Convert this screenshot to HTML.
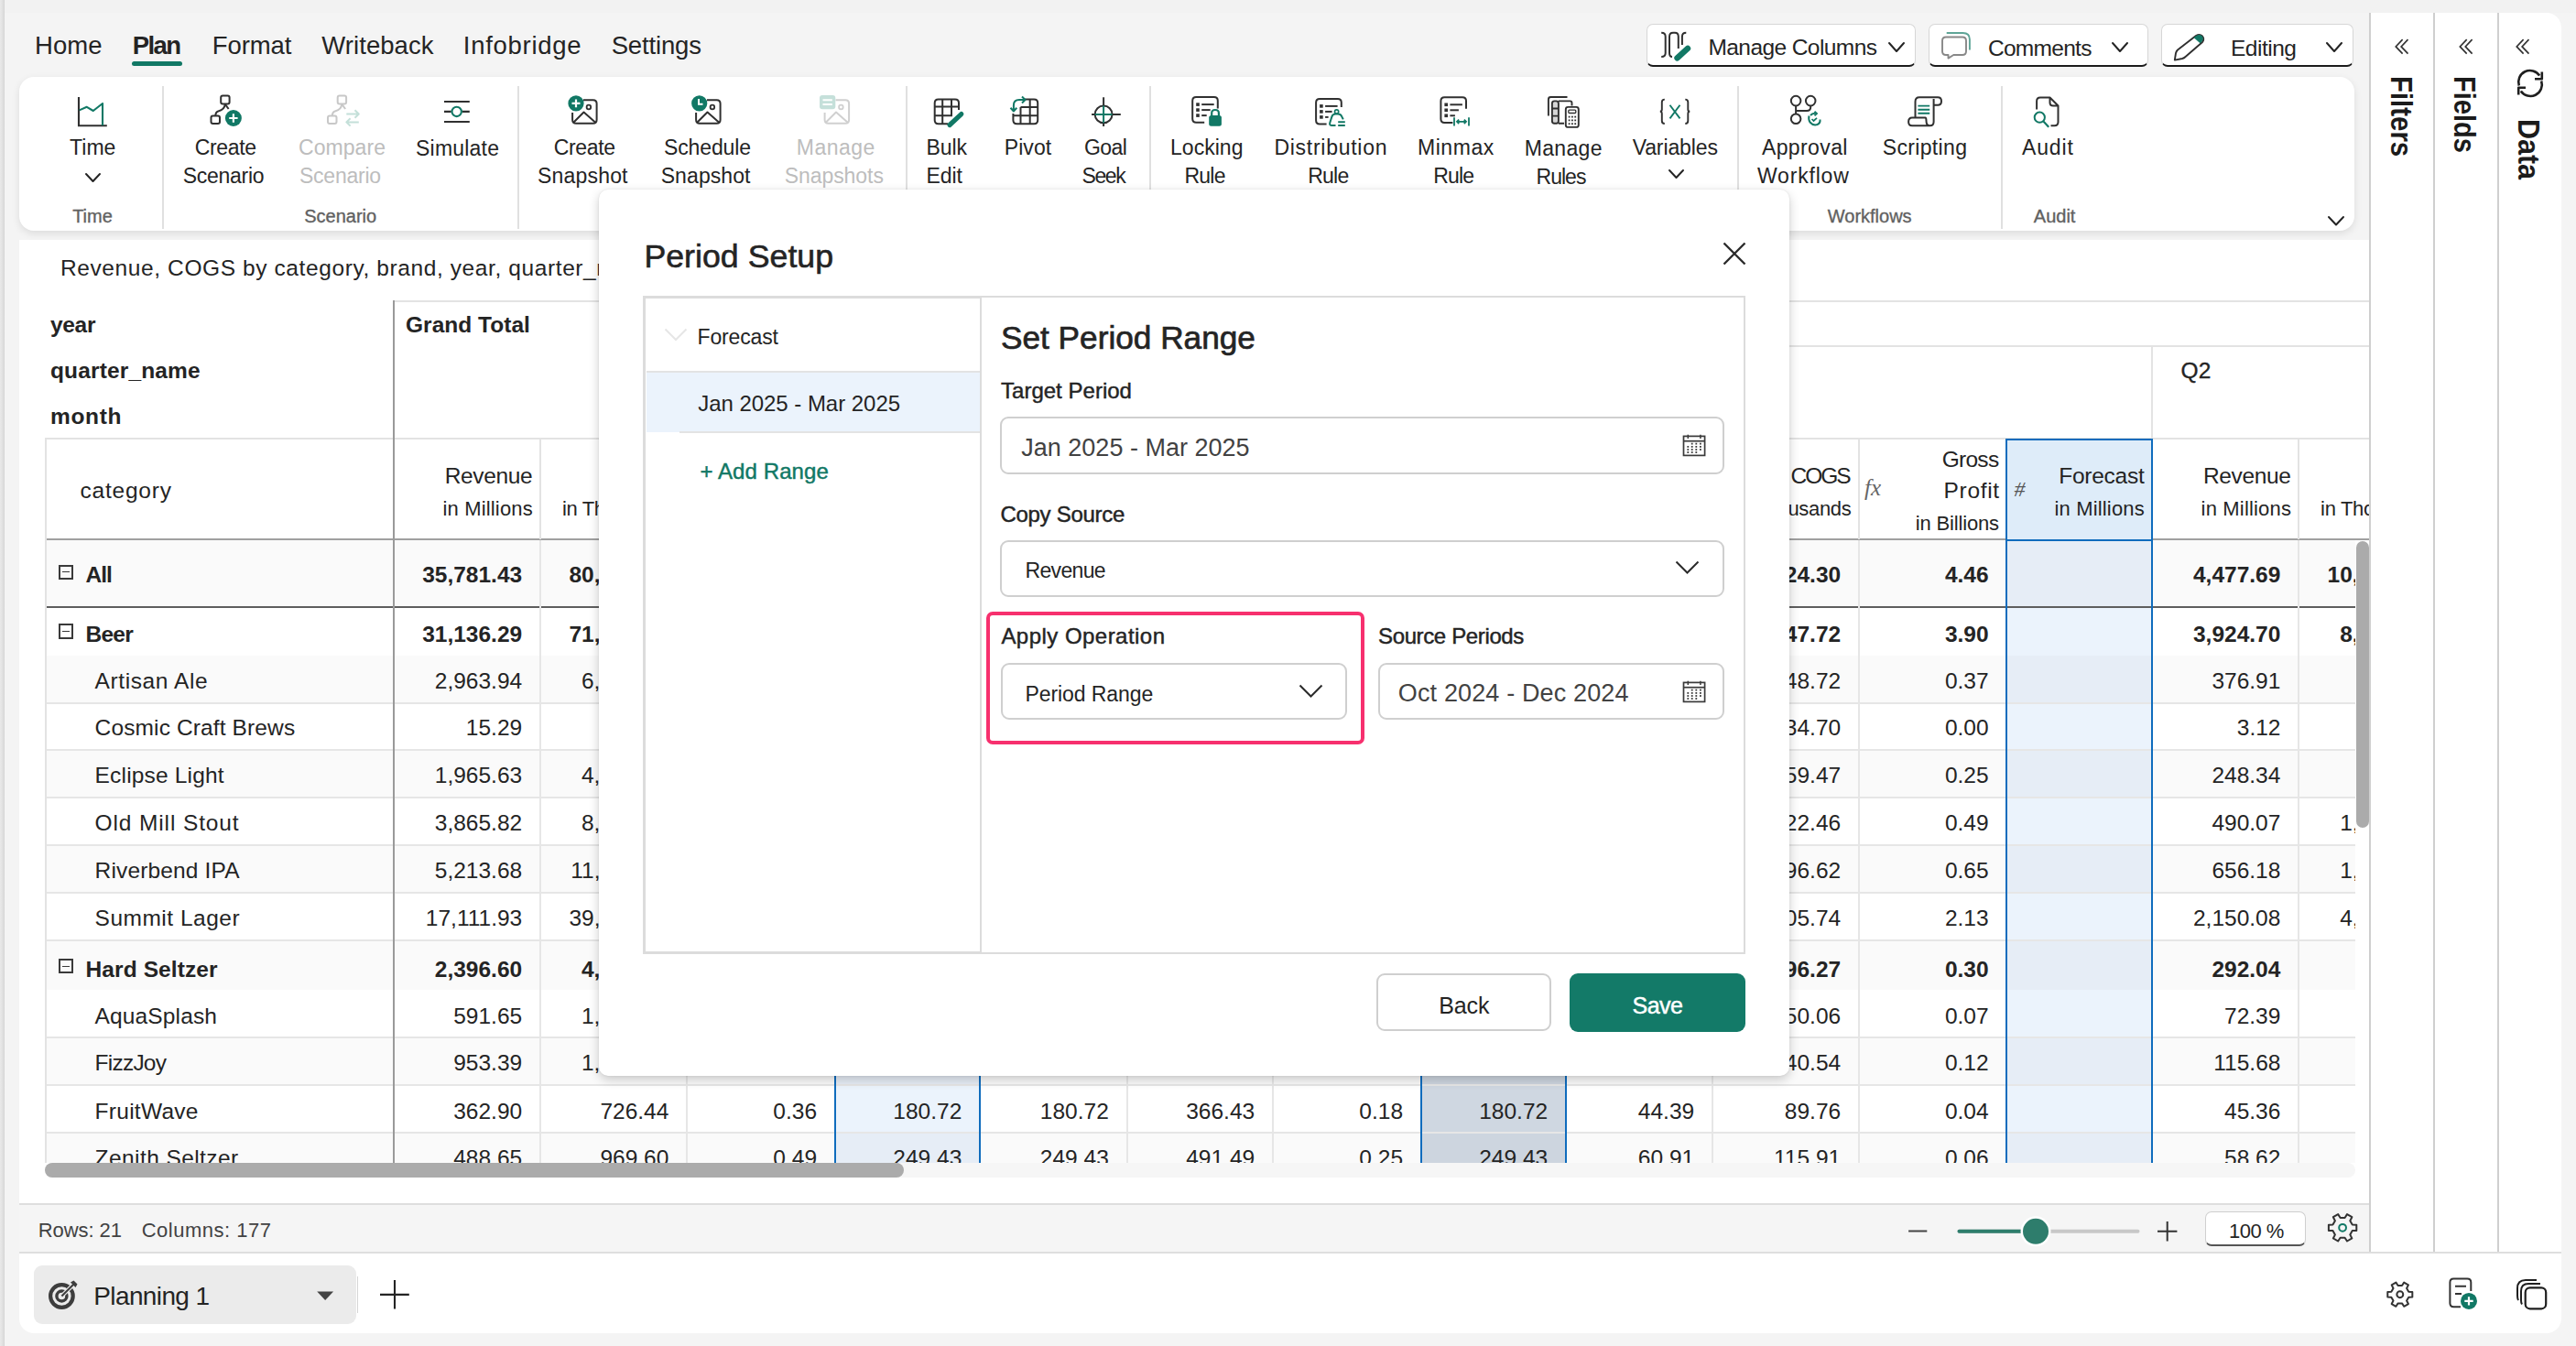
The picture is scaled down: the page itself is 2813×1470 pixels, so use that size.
<!DOCTYPE html>
<html><head><meta charset="utf-8"><title>Planning</title>
<style>
html,body{margin:0;padding:0;}
body{width:2813px;height:1470px;position:relative;overflow:hidden;background:#f4f4f4;font-family:"Liberation Sans", sans-serif;}
div{box-sizing:border-box;}
</style></head><body>
<div style="position:absolute;left:0.00px;top:0.00px;width:2813.00px;height:13.50px;background:#f2f2f2;"></div>
<div style="position:absolute;left:0.00px;top:0.00px;width:5.00px;height:1470.00px;background:linear-gradient(90deg,#e9e9e9,#dedede 70%,#d4d4d4);"></div>
<div style="position:absolute;top:36.12px;font-size:27.5px;line-height:27.5px;color:#242424;white-space:nowrap;letter-spacing:0.025px;left:38.00px;">Home</div>
<div style="position:absolute;top:36.12px;font-size:27.5px;line-height:27.5px;color:#242424;white-space:nowrap;font-weight:700;letter-spacing:-1.608px;left:144.80px;">Plan</div>
<div style="position:absolute;top:36.12px;font-size:27.5px;line-height:27.5px;color:#242424;white-space:nowrap;letter-spacing:-0.108px;left:231.80px;">Format</div>
<div style="position:absolute;top:36.12px;font-size:27.5px;line-height:27.5px;color:#242424;white-space:nowrap;letter-spacing:0.059px;left:351.30px;">Writeback</div>
<div style="position:absolute;top:36.12px;font-size:27.5px;line-height:27.5px;color:#242424;white-space:nowrap;letter-spacing:0.725px;left:505.80px;">Infobridge</div>
<div style="position:absolute;top:36.12px;font-size:27.5px;line-height:27.5px;color:#242424;white-space:nowrap;letter-spacing:-0.159px;left:667.70px;">Settings</div>
<div style="position:absolute;left:144.00px;top:67.00px;width:55.00px;height:4.50px;background:#117865;border-radius:3px;"></div>
<div style="position:absolute;left:1798.00px;top:26.00px;width:294.00px;height:47.00px;background:#fff;border:1.5px solid #d6d6d6;border-bottom:2.5px solid #1b1b1b;border-radius:7px;"></div>
<div style="position:absolute;left:2106.00px;top:26.00px;width:240.00px;height:47.00px;background:#fff;border:1.5px solid #d6d6d6;border-bottom:2.5px solid #1b1b1b;border-radius:7px;"></div>
<div style="position:absolute;left:2360.00px;top:26.00px;width:210.00px;height:47.00px;background:#fff;border:1.5px solid #d6d6d6;border-bottom:2.5px solid #1b1b1b;border-radius:7px;"></div>
<div style="position:absolute;top:40.17px;font-size:24.5px;line-height:24.5px;color:#242424;white-space:nowrap;letter-spacing:-0.583px;left:1865.50px;">Manage Columns</div>
<div style="position:absolute;top:41.17px;font-size:24.5px;line-height:24.5px;color:#242424;white-space:nowrap;letter-spacing:-0.722px;left:2171.00px;">Comments</div>
<div style="position:absolute;top:41.17px;font-size:24.5px;line-height:24.5px;color:#242424;white-space:nowrap;letter-spacing:-0.495px;left:2436.00px;">Editing</div>
<svg style="position:absolute;left:2061.00px;top:44.50px;" width="20" height="13" viewBox="0 0 20 13" fill="none"><path d="M2 2 L10.0 11 L18 2" stroke="#242424" stroke-width="2" stroke-linecap="round" stroke-linejoin="round"/></svg>
<svg style="position:absolute;left:2305.00px;top:44.50px;" width="20" height="13" viewBox="0 0 20 13" fill="none"><path d="M2 2 L10.0 11 L18 2" stroke="#242424" stroke-width="2" stroke-linecap="round" stroke-linejoin="round"/></svg>
<svg style="position:absolute;left:2539.00px;top:44.50px;" width="20" height="13" viewBox="0 0 20 13" fill="none"><path d="M2 2 L10.0 11 L18 2" stroke="#242424" stroke-width="2" stroke-linecap="round" stroke-linejoin="round"/></svg>
<svg style="position:absolute;left:1805px;top:28px;overflow:visible" width="50" height="44" viewBox="1805 28 50 44" fill="none"><path d="M1814.2 35.8 Q1818.7 35.8 1818.7 40 L1818.7 58 Q1818.7 62 1814.2 62" stroke="#303030" stroke-width="2"/><path d="M1826 62 Q1823 62 1823 58 L1823 40 Q1823 35.8 1827 35.8 L1829 35.8 Q1832.8 35.8 1832.8 40 L1832.8 53" stroke="#303030" stroke-width="2"/><path d="M1841.3 35.8 Q1836.9 35.8 1836.9 40 L1836.9 49" stroke="#303030" stroke-width="2"/><path d="M1831.5 63.3 L1843 52.8" stroke="#117865" stroke-width="6.4" stroke-linecap="round"/></svg>
<svg style="position:absolute;left:2110px;top:28px;overflow:visible" width="50" height="44" viewBox="2110 28 50 44" fill="none"><path d="M2125 40.5 L2143 40.5 Q2147 40.5 2147 44.5 L2147 56 Q2147 60 2143 60 L2133.3 60 L2127.5 63.6 L2127.5 60 L2125 60 Q2121 60 2121 56 L2121 44.5 Q2121 40.5 2125 40.5 Z" stroke="#888" stroke-width="1.9" stroke-linejoin="round"/><path d="M2125.7 36 L2143.5 36 Q2150.9 36 2150.9 43 L2150.9 54.5" stroke="#5fa597" stroke-width="1.9"/></svg>
<svg style="position:absolute;left:2365px;top:28px;overflow:visible" width="50" height="44" viewBox="2365 28 50 44" fill="none"><path d="M2374.8 65.6 L2376 58 Q2376.5 56 2378 54.5 L2398 39 Q2402 36.5 2405 39.5 Q2407.5 42.5 2405 46 L2386.5 62 Q2385 63.5 2383 64 Z" stroke="#303030" stroke-width="1.9" stroke-linejoin="round"/><path d="M2395.5 41 L2398.5 39 Q2402 36.7 2404.5 39.3 Q2407 42 2404.5 45.2 L2402.5 47.2 Z" fill="#117865"/></svg>
<div style="position:absolute;left:21.00px;top:84.00px;width:2550.00px;height:168.00px;background:#fff;border-radius:16px;box-shadow:0 3px 8px rgba(0,0,0,0.10);"></div>
<div style="position:absolute;left:177.00px;top:94.00px;width:2.00px;height:156.00px;background:#e0e0e0;"></div>
<div style="position:absolute;left:565.00px;top:94.00px;width:2.00px;height:156.00px;background:#e0e0e0;"></div>
<div style="position:absolute;left:989.00px;top:94.00px;width:2.00px;height:156.00px;background:#e0e0e0;"></div>
<div style="position:absolute;left:1255.00px;top:94.00px;width:2.00px;height:156.00px;background:#e0e0e0;"></div>
<div style="position:absolute;left:1897.00px;top:94.00px;width:2.00px;height:156.00px;background:#e0e0e0;"></div>
<div style="position:absolute;left:2185.00px;top:94.00px;width:2.00px;height:156.00px;background:#e0e0e0;"></div>
<div style="position:absolute;top:149.75px;font-size:23px;line-height:23px;color:#242424;white-space:nowrap;letter-spacing:0.048px;left:76.00px;">Time</div>
<svg style="position:absolute;left:91.50px;top:187.50px;" width="19" height="12" viewBox="0 0 19 12" fill="none"><path d="M2 2 L9.5 10 L17 2" stroke="#242424" stroke-width="2" stroke-linecap="round" stroke-linejoin="round"/></svg>
<div style="position:absolute;top:149.75px;font-size:23px;line-height:23px;color:#242424;white-space:nowrap;letter-spacing:-0.36px;left:212.80px;">Create</div>
<div style="position:absolute;top:181.05px;font-size:23px;line-height:23px;color:#242424;white-space:nowrap;letter-spacing:-0.262px;left:199.70px;">Scenario</div>
<div style="position:absolute;top:149.75px;font-size:23px;line-height:23px;color:#bdbdbd;white-space:nowrap;letter-spacing:0.059px;left:326.00px;">Compare</div>
<div style="position:absolute;top:181.05px;font-size:23px;line-height:23px;color:#bdbdbd;white-space:nowrap;letter-spacing:-0.248px;left:327.00px;">Scenario</div>
<div style="position:absolute;top:151.15px;font-size:23px;line-height:23px;color:#242424;white-space:nowrap;letter-spacing:0.219px;left:454.00px;">Simulate</div>
<div style="position:absolute;top:149.75px;font-size:23px;line-height:23px;color:#242424;white-space:nowrap;letter-spacing:-0.36px;left:604.80px;">Create</div>
<div style="position:absolute;top:181.05px;font-size:23px;line-height:23px;color:#242424;white-space:nowrap;letter-spacing:0.189px;left:587.00px;">Snapshot</div>
<div style="position:absolute;top:149.75px;font-size:23px;line-height:23px;color:#242424;white-space:nowrap;letter-spacing:-0.13px;left:725.00px;">Schedule</div>
<div style="position:absolute;top:181.05px;font-size:23px;line-height:23px;color:#242424;white-space:nowrap;letter-spacing:0.089px;left:721.70px;">Snapshot</div>
<div style="position:absolute;top:149.75px;font-size:23px;line-height:23px;color:#bdbdbd;white-space:nowrap;letter-spacing:0.491px;left:869.80px;">Manage</div>
<div style="position:absolute;top:181.05px;font-size:23px;line-height:23px;color:#bdbdbd;white-space:nowrap;letter-spacing:-0.059px;left:856.70px;">Snapshots</div>
<div style="position:absolute;top:149.75px;font-size:23px;line-height:23px;color:#242424;white-space:nowrap;letter-spacing:-0.15px;left:1011.60px;">Bulk</div>
<div style="position:absolute;top:181.05px;font-size:23px;line-height:23px;color:#242424;white-space:nowrap;letter-spacing:-0.092px;left:1011.60px;">Edit</div>
<div style="position:absolute;top:149.75px;font-size:23px;line-height:23px;color:#242424;white-space:nowrap;letter-spacing:0.106px;left:1096.70px;">Pivot</div>
<div style="position:absolute;top:149.75px;font-size:23px;line-height:23px;color:#242424;white-space:nowrap;letter-spacing:-0.61px;left:1184.00px;">Goal</div>
<div style="position:absolute;top:181.05px;font-size:23px;line-height:23px;color:#242424;white-space:nowrap;letter-spacing:-1.418px;left:1181.50px;">Seek</div>
<div style="position:absolute;top:149.75px;font-size:23px;line-height:23px;color:#242424;white-space:nowrap;letter-spacing:0.028px;left:1278.00px;">Locking</div>
<div style="position:absolute;top:181.05px;font-size:23px;line-height:23px;color:#242424;white-space:nowrap;letter-spacing:-0.788px;left:1293.50px;">Rule</div>
<div style="position:absolute;top:149.75px;font-size:23px;line-height:23px;color:#242424;white-space:nowrap;letter-spacing:0.736px;left:1391.40px;">Distribution</div>
<div style="position:absolute;top:181.05px;font-size:23px;line-height:23px;color:#242424;white-space:nowrap;letter-spacing:-0.788px;left:1428.30px;">Rule</div>
<div style="position:absolute;top:149.75px;font-size:23px;line-height:23px;color:#242424;white-space:nowrap;letter-spacing:0.58px;left:1547.90px;">Minmax</div>
<div style="position:absolute;top:181.05px;font-size:23px;line-height:23px;color:#242424;white-space:nowrap;letter-spacing:-0.822px;left:1565.30px;">Rule</div>
<div style="position:absolute;top:151.15px;font-size:23px;line-height:23px;color:#242424;white-space:nowrap;letter-spacing:0.331px;left:1664.70px;">Manage</div>
<div style="position:absolute;top:182.45px;font-size:23px;line-height:23px;color:#242424;white-space:nowrap;letter-spacing:-0.966px;left:1677.50px;">Rules</div>
<div style="position:absolute;top:149.75px;font-size:23px;line-height:23px;color:#242424;white-space:nowrap;letter-spacing:-0.123px;left:1782.70px;">Variables</div>
<svg style="position:absolute;left:1820.50px;top:183.50px;" width="19" height="12" viewBox="0 0 19 12" fill="none"><path d="M2 2 L9.5 10 L17 2" stroke="#242424" stroke-width="2" stroke-linecap="round" stroke-linejoin="round"/></svg>
<div style="position:absolute;top:149.75px;font-size:23px;line-height:23px;color:#242424;white-space:nowrap;letter-spacing:0.395px;left:1923.90px;">Approval</div>
<div style="position:absolute;top:181.05px;font-size:23px;line-height:23px;color:#242424;white-space:nowrap;letter-spacing:0.802px;left:1919.00px;">Workflow</div>
<div style="position:absolute;top:149.75px;font-size:23px;line-height:23px;color:#242424;white-space:nowrap;letter-spacing:0.354px;left:2055.70px;">Scripting</div>
<div style="position:absolute;top:149.75px;font-size:23px;line-height:23px;color:#242424;white-space:nowrap;letter-spacing:0.915px;left:2207.90px;">Audit</div>
<div style="position:absolute;top:225.70px;font-size:20px;line-height:20px;color:#616161;white-space:nowrap;-webkit-text-stroke:0.35px #616161;left:-649.00px;width:1500px;text-align:center;">Time</div>
<div style="position:absolute;top:225.70px;font-size:20px;line-height:20px;color:#616161;white-space:nowrap;-webkit-text-stroke:0.35px #616161;left:-378.30px;width:1500px;text-align:center;">Scenario</div>
<div style="position:absolute;top:225.70px;font-size:20px;line-height:20px;color:#616161;white-space:nowrap;-webkit-text-stroke:0.35px #616161;left:1291.70px;width:1500px;text-align:center;">Workflows</div>
<div style="position:absolute;top:225.70px;font-size:20px;line-height:20px;color:#616161;white-space:nowrap;-webkit-text-stroke:0.35px #616161;left:1493.60px;width:1500px;text-align:center;">Audit</div>
<svg style="position:absolute;left:2541.00px;top:235.25px;" width="20" height="12.5" viewBox="0 0 20 12.5" fill="none"><path d="M2 2 L10.0 10.5 L18 2" stroke="#242424" stroke-width="2" stroke-linecap="round" stroke-linejoin="round"/></svg>
<svg style="position:absolute;left:60px;top:95px;overflow:visible" width="2200" height="50" viewBox="60 95 2200 50" fill="none"><path d="M86 106 L86 137.2 L116.8 137.2" stroke="#303030" stroke-width="2.1"/><path d="M86.6 120.4 L94.8 116.8 L101.8 121 L112 113 L112 137" stroke="#117865" stroke-width="2.1" stroke-linejoin="round"/><rect x="241.2" y="104.4" width="9.4" height="9" rx="2" stroke="#303030" stroke-width="2"/><rect x="230.5" y="126.6" width="9.5" height="8.5" rx="2" stroke="#303030" stroke-width="2"/><path d="M245.9 113.4 Q245 120 239 121.2 Q235.3 122 235.3 126.6" stroke="#303030" stroke-width="2"/><path d="M245.9 113.8 L249.6 119" stroke="#303030" stroke-width="2"/><circle cx="254.9" cy="129" r="9" fill="#117865"/><path d="M250.22 129 L259.58 129 M254.9 124.32 L254.9 133.68" stroke="#fff" stroke-width="2.2"/><rect x="368.7" y="104.4" width="9.4" height="9" rx="2" stroke="#c8c8c8" stroke-width="2"/><rect x="358.0" y="126.6" width="9.5" height="8.5" rx="2" stroke="#c8c8c8" stroke-width="2"/><path d="M373.4 113.4 Q372.5 120 366.5 121.2 Q362.8 122 362.8 126.6" stroke="#c8c8c8" stroke-width="2"/><path d="M373.4 113.8 L377.1 119" stroke="#c8c8c8" stroke-width="2"/><path d="M378.3 124.5 L391.8 124.5 M387.5 120.3 L391.8 124.5 L387.5 128.7 M391.8 133.4 L378.3 133.4 M382.6 129.2 L378.3 133.4 L382.6 137.6" stroke="#c4e0d9" stroke-width="2" stroke-linejoin="round"/><path d="M485 111 L512.8 111 M485 133 L512.8 133 M485 121.9 L492.7 121.9 M504.7 121.9 L512.8 121.9" stroke="#303030" stroke-width="2.1"/><circle cx="498.7" cy="121.9" r="5.2" stroke="#117865" stroke-width="2.1"/><path d="M637 109.2 L647.6 109.2 Q651.6 109.2 651.6 113.2 L651.6 130.7 Q651.6 134.7 647.6 134.7 L629.1 134.7 Q625.1 134.7 625.1 130.7 L625.1 123" stroke="#303030" stroke-width="2"/><circle cx="642.9" cy="117" r="2.3" stroke="#303030" stroke-width="1.8"/><path d="M626 134 L637.5 122.5 L650.5 134" stroke="#303030" stroke-width="2" stroke-linejoin="round"/><circle cx="629" cy="112.9" r="8.6" fill="#117865"/><path d="M624.528 112.9 L633.472 112.9 M629 108.42800000000001 L629 117.372" stroke="#fff" stroke-width="2.2"/><path d="M772 109.2 L782.6 109.2 Q786.6 109.2 786.6 113.2 L786.6 130.7 Q786.6 134.7 782.6 134.7 L764.1 134.7 Q760.1 134.7 760.1 130.7 L760.1 123" stroke="#303030" stroke-width="2"/><circle cx="777.9" cy="117" r="2.3" stroke="#303030" stroke-width="1.8"/><path d="M761 134 L772.5 122.5 L785.5 134" stroke="#303030" stroke-width="2" stroke-linejoin="round"/><circle cx="763.7" cy="112.9" r="8.6" fill="#117865"/><path d="M763 108 L763 113.8 L767.5 113.8" stroke="#fff" stroke-width="2"/><path d="M912.5 109.2 L923.1 109.2 Q927.1 109.2 927.1 113.2 L927.1 130.7 Q927.1 134.7 923.1 134.7 L904.6 134.7 Q900.6 134.7 900.6 130.7 L900.6 123" stroke="#d0d0d0" stroke-width="2"/><circle cx="918.4" cy="117" r="2.3" stroke="#d0d0d0" stroke-width="1.8"/><path d="M901.5 134 L913.0 122.5 L926.0 134" stroke="#d0d0d0" stroke-width="2" stroke-linejoin="round"/><rect x="895" y="104" width="17.3" height="15.3" rx="3" fill="#c5e0da"/><path d="M898.5 109.3 L908.8 109.3 M898.5 114 L908.8 114" stroke="#fff" stroke-width="2"/><path d="M1035 135.2 L1024.7 135.2 Q1020.7 135.2 1020.7 131.2 L1020.7 112.4 Q1020.7 108.4 1024.7 108.4 L1043 108.4 Q1047 108.4 1047 112.4 L1047 120" stroke="#303030" stroke-width="2"/><path d="M1029.2 108.4 L1029.2 135.2 M1039 108.4 L1039 126.3 L1035 126.3 M1020.7 116.4 L1047 116.4 M1020.7 126.3 L1035 126.3" stroke="#303030" stroke-width="2"/><path d="M1037 136.5 L1049.8 124.6" stroke="#117865" stroke-width="5.2" stroke-linecap="round"/><path d="M1117.5 108.4 L1129.2 108.4 Q1133.2 108.4 1133.2 112.4 L1133.2 131.2 Q1133.2 135.2 1129.2 135.2 L1110.4 135.2 Q1106.4 135.2 1106.4 131.2 L1106.4 124" stroke="#303030" stroke-width="2"/><path d="M1114.5 116.9 L1114.5 135.2 M1124.7 108.4 L1124.7 135.2 M1114.5 116.9 L1133.2 116.9 M1106.4 126.3 L1133.2 126.3" stroke="#303030" stroke-width="2"/><path d="M1106.9 121.5 L1106.9 115 Q1106.9 109 1113 109 L1119.5 109 M1116 105.5 L1119.5 109 L1116 112.5 M1103.5 117.8 L1106.9 121.5 L1110.3 117.8" stroke="#117865" stroke-width="2" stroke-linejoin="round"/><circle cx="1205.1" cy="124.9" r="9.4" stroke="#303030" stroke-width="2"/><path d="M1205.1 106.2 L1205.1 115.5 M1205.1 134.3 L1205.1 137.9 M1192.1 124.9 L1195.7 124.9 M1214.5 124.9 L1223.8 124.9" stroke="#303030" stroke-width="2"/><path d="M1205.1 115.5 L1205.1 134.3 M1195.7 124.9 L1214.5 124.9" stroke="#117865" stroke-width="2"/><path d="M1315.2 133.7 L1306.2 133.7 Q1302.2 133.7 1302.2 129.7 L1302.2 110.1 Q1302.2 106.1 1306.2 106.1 L1325.8 106.1 Q1329.8 106.1 1329.8 110.1 L1329.8 118.6" stroke="#303030" stroke-width="2"/><rect x="1306.2" y="112.3" width="3.6" height="3.6" fill="#303030"/><path d="M1312.2 114.1 L1325.7 114.1" stroke="#303030" stroke-width="2"/><rect x="1306.2" y="118.3" width="3.6" height="3.6" fill="#303030"/><path d="M1312.2 120.1 L1321.7 120.1" stroke="#303030" stroke-width="2"/><rect x="1306.2" y="124.3" width="3.6" height="3.6" fill="#303030"/><path d="M1312.2 126.1 L1317.7 126.1" stroke="#303030" stroke-width="2"/><rect x="1320.2" y="126" width="13.7" height="11.8" rx="2.5" fill="#117865"/><path d="M1323.2 126.5 L1323.2 123.5 Q1323.2 120 1327 120 Q1330.9 120 1330.9 123.5 L1330.9 126.5" stroke="#117865" stroke-width="2.2"/><path d="M1448.6 135.6 L1441.1 135.6 Q1437.1 135.6 1437.1 131.6 L1437.1 111.9 Q1437.1 107.9 1441.1 107.9 L1460.8 107.9 Q1464.8 107.9 1464.8 111.9 L1464.8 117.1" stroke="#303030" stroke-width="2"/><rect x="1441.1" y="114.10000000000001" width="3.6" height="3.6" fill="#303030"/><path d="M1447.1 115.9 L1460.6 115.9" stroke="#303030" stroke-width="2"/><rect x="1441.1" y="120.10000000000001" width="3.6" height="3.6" fill="#303030"/><path d="M1447.1 121.9 L1454.6 121.9" stroke="#303030" stroke-width="2"/><rect x="1441.1" y="126.10000000000001" width="3.6" height="3.6" fill="#303030"/><path d="M1447.1 127.9 L1450.6 127.9" stroke="#303030" stroke-width="2"/><path d="M1458.5 137 L1454.5 137 Q1451.6 137 1452.2 134.3 L1454.3 127.6 Q1455.3 124.6 1458.4 124.6 L1461 124.6 Q1464 124.6 1465.2 127.2 L1466.8 130.4" stroke="#117865" stroke-width="2" stroke-linejoin="round"/><circle cx="1459.6" cy="122" r="2.1" stroke="#117865" stroke-width="1.7"/><path d="M1461.2 133.2 L1468.8 133.2 M1461.2 137 L1468.8 137" stroke="#117865" stroke-width="1.9"/><path d="M1586.4 133.9 L1577.4 133.9 Q1573.4 133.9 1573.4 129.9 L1573.4 110.3 Q1573.4 106.3 1577.4 106.3 L1597.0 106.3 Q1601.0 106.3 1601.0 110.3 L1601.0 118.8" stroke="#303030" stroke-width="2"/><rect x="1577.4" y="112.5" width="3.6" height="3.6" fill="#303030"/><path d="M1583.4 114.3 L1596.9 114.3" stroke="#303030" stroke-width="2"/><rect x="1577.4" y="118.5" width="3.6" height="3.6" fill="#303030"/><path d="M1583.4 120.3 L1592.9 120.3" stroke="#303030" stroke-width="2"/><rect x="1577.4" y="124.5" width="3.6" height="3.6" fill="#303030"/><path d="M1583.4 126.3 L1588.9 126.3" stroke="#303030" stroke-width="2"/><path d="M1588 128.2 L1588 137.5 M1604 128.2 L1604 137.5 M1591 132.8 L1601 132.8 M1593.2 130.6 L1591 132.8 L1593.2 135 M1598.8 130.6 L1601 132.8 L1598.8 135" stroke="#117865" stroke-width="1.8"/><path d="M1690.9 126.5 L1690.9 108.5 Q1690.9 106 1693.4 106 L1711.5 106" stroke="#303030" stroke-width="1.9"/><rect x="1694.9" y="110.4" width="7" height="24.3" rx="2.5" fill="#d6d6d6" stroke="#303030" stroke-width="1.9"/><path d="M1694.9 118.5 L1701.9 118.5 M1694.9 126.6 L1701.9 126.6" stroke="#303030" stroke-width="1.9"/><path d="M1701.9 110.4 L1714.5 110.4 Q1716.5 110.4 1716.5 112.5 L1716.5 115.5 M1701.9 134.7 L1708 134.7" stroke="#303030" stroke-width="1.9"/><rect x="1709.8" y="116.9" width="14" height="22" rx="2.5" stroke="#303030" stroke-width="1.9"/><rect x="1712.8" y="120.2" width="8" height="3.3" rx="1" stroke="#303030" stroke-width="1.3"/><rect x="1712.7" y="126.7" width="1.8" height="1.8" fill="#303030"/><rect x="1716.0" y="126.7" width="1.8" height="1.8" fill="#303030"/><rect x="1719.3" y="126.7" width="1.8" height="1.8" fill="#303030"/><rect x="1712.7" y="130.5" width="1.8" height="1.8" fill="#303030"/><rect x="1716.0" y="130.5" width="1.8" height="1.8" fill="#303030"/><rect x="1719.3" y="130.5" width="1.8" height="1.8" fill="#303030"/><rect x="1712.7" y="134.3" width="1.8" height="1.8" fill="#303030"/><rect x="1716.0" y="134.3" width="1.8" height="1.8" fill="#303030"/><rect x="1719.3" y="134.3" width="1.8" height="1.8" fill="#303030"/><path d="M1817.8 108.6 Q1814.8 108.6 1814.8 111.6 L1814.8 119.5 Q1814.8 121.8 1812.8 121.8 Q1814.8 121.8 1814.8 124.2 L1814.8 132 Q1814.8 135 1817.8 135" stroke="#303030" stroke-width="1.9"/><path d="M1840.3 108.6 Q1843.3 108.6 1843.3 111.6 L1843.3 119.5 Q1843.3 121.8 1845.3 121.8 Q1843.3 121.8 1843.3 124.2 L1843.3 132 Q1843.3 135 1840.3 135" stroke="#303030" stroke-width="1.9"/><path d="M1823.5 114.8 L1834.5 129.4 M1834.5 114.8 L1823.5 129.4" stroke="#117865" stroke-width="1.9"/><circle cx="1961.1" cy="110.1" r="5.3" stroke="#303030" stroke-width="2"/><circle cx="1977.2" cy="110.1" r="5.3" stroke="#303030" stroke-width="2"/><circle cx="1961.1" cy="129.8" r="5.3" stroke="#303030" stroke-width="2"/><path d="M1961.1 115.4 L1961.1 124.5 M1961.1 121 L1973 121 Q1977.2 121 1977.2 117 L1977.2 115.4" stroke="#303030" stroke-width="2"/><path d="M1975.5 126.5 Q1974.5 130.5 1976.5 133.5 Q1980 137.5 1984.5 136 Q1988 134.5 1987.5 130.5 M1977 126 Q1979.5 123 1983 123.8" stroke="#117865" stroke-width="2"/><path d="M1981.5 121.8 L1984 124 L1981.5 126.3" stroke="#117865" stroke-width="1.8"/><path d="M1978.5 130 L1980.5 132 L1984 128.8" stroke="#117865" stroke-width="1.7"/><path d="M2091.5 128.5 L2091.5 111 Q2091.5 106.3 2096 106.3 L2116 106.3 Q2120 106.3 2120 110.5 Q2120 114.8 2116 114.8 L2112 114.8" stroke="#303030" stroke-width="2"/><path d="M2111.6 108 L2111.6 133 Q2111.6 137.3 2107.5 137.3 L2088 137.3 Q2084.1 137.3 2084.1 133 Q2084.1 128.5 2088 128.5 L2102.5 128.5 Q2103.5 128.5 2103.5 132 Q2103.5 137.3 2107.5 137.3" stroke="#303030" stroke-width="2"/><path d="M2094.4 115.6 L2107.2 115.6 M2094.4 119.7 L2107.2 119.7 M2094.4 123.8 L2107.2 123.8" stroke="#117865" stroke-width="1.9"/><path d="M2224.1 119.5 L2224.1 110.5 Q2224.1 106.5 2228 106.5 L2238.5 106.5 L2247.5 115.5 L2247.5 133.3 Q2247.5 137.3 2243.5 137.3 L2239.5 137.3 M2238.5 106.5 L2238.5 112 Q2238.5 115.5 2242 115.5 L2247.5 115.5" stroke="#303030" stroke-width="2" stroke-linejoin="round"/><circle cx="2227.3" cy="128.2" r="5.6" stroke="#117865" stroke-width="2"/><path d="M2231.4 132.5 L2237.2 138.8" stroke="#117865" stroke-width="2.1"/></svg>
<div style="position:absolute;left:2587.00px;top:14.00px;width:210.00px;height:1354.00px;background:#fff;border-top-right-radius:16px;"></div>
<div style="position:absolute;left:2586.60px;top:14.00px;width:2.00px;height:1354.00px;background:#cfcfcf;"></div>
<div style="position:absolute;left:2656.60px;top:14.00px;width:2.00px;height:1354.00px;background:#cfcfcf;"></div>
<div style="position:absolute;left:2726.60px;top:14.00px;width:2.00px;height:1354.00px;background:#cfcfcf;"></div>
<svg style="position:absolute;left:2590px;top:30px;overflow:visible" width="200" height="80" viewBox="2590 30 200 80" fill="none"><path d="M2623.6 43.1 L2616.2 50.9 L2623.6 58.6" stroke="#303030" stroke-width="1.6"/><path d="M2629.5 43.1 L2622.1 50.9 L2629.5 58.6" stroke="#303030" stroke-width="1.6"/><path d="M2693.7 43.1 L2686.2999999999997 50.9 L2693.7 58.6" stroke="#303030" stroke-width="1.6"/><path d="M2699.6 43.1 L2692.2 50.9 L2699.6 58.6" stroke="#303030" stroke-width="1.6"/><path d="M2755.6 43.1 L2748.2 50.9 L2755.6 58.6" stroke="#303030" stroke-width="1.6"/><path d="M2761.5 43.1 L2754.1 50.9 L2761.5 58.6" stroke="#303030" stroke-width="1.6"/><path d="M2750.8 93.5 A12.6 12.6 0 0 1 2773.2 82.5" stroke="#1f1f1f" stroke-width="2.6"/><path d="M2775.2 88.5 A12.6 12.6 0 0 1 2752.8 99.5" stroke="#1f1f1f" stroke-width="2.6"/><path d="M2775.8 78.5 L2775.8 86.2 L2768 86.2 M2750.2 103.5 L2750.2 95.8 L2758 95.8" stroke="#1f1f1f" stroke-width="2.6" stroke-linejoin="round"/></svg>
<div style="position:absolute;left:2635px;top:82.5px;transform-origin:0 0;transform:rotate(90deg) scaleX(0.864);font-size:34px;line-height:25px;height:25px;font-weight:700;color:#1b1b1b;white-space:nowrap">Filters</div>
<div style="position:absolute;left:2704px;top:82.5px;transform-origin:0 0;transform:rotate(90deg) scaleX(0.854);font-size:34px;line-height:25px;height:25px;font-weight:700;color:#1b1b1b;white-space:nowrap">Fields</div>
<div style="position:absolute;left:2774px;top:130.3px;transform-origin:0 0;transform:rotate(90deg) scaleX(0.896);font-size:34px;line-height:25px;height:25px;font-weight:700;color:#1b1b1b;white-space:nowrap">Data</div>
<div style="position:absolute;left:21.00px;top:262.00px;width:2566.00px;height:1053.00px;background:#fff;"></div>
<div style="position:absolute;top:281.18px;font-size:24.5px;line-height:24.5px;color:#242424;white-space:nowrap;letter-spacing:0.6px;left:66.00px;">Revenue, COGS by category, brand, year, quarter_name, month</div>
<div style="position:absolute;top:342.88px;font-size:24.5px;line-height:24.5px;color:#242424;white-space:nowrap;font-weight:700;letter-spacing:-0.323px;left:55.00px;">year</div>
<div style="position:absolute;top:392.98px;font-size:24.5px;line-height:24.5px;color:#242424;white-space:nowrap;font-weight:700;letter-spacing:0.139px;left:55.00px;">quarter_name</div>
<div style="position:absolute;top:443.18px;font-size:24.5px;line-height:24.5px;color:#242424;white-space:nowrap;font-weight:700;letter-spacing:0.663px;left:55.00px;">month</div>
<div style="position:absolute;left:430.00px;top:327.50px;width:2157.00px;height:2.00px;background:#e3e3e3;"></div>
<div style="position:absolute;left:1070.00px;top:376.50px;width:1517.00px;height:2.00px;background:#e3e3e3;"></div>
<div style="position:absolute;left:49.00px;top:478.30px;width:2538.00px;height:2.00px;background:#e3e3e3;"></div>
<div style="position:absolute;left:2349.00px;top:377.00px;width:2.00px;height:102.00px;background:#e3e3e3;"></div>
<div style="position:absolute;left:1069.00px;top:328.00px;width:2.00px;height:151.00px;background:#e3e3e3;"></div>
<div style="position:absolute;top:343.48px;font-size:24.5px;line-height:24.5px;color:#242424;white-space:nowrap;font-weight:700;letter-spacing:0.019px;left:443.00px;">Grand Total</div>
<div style="position:absolute;top:392.68px;font-size:24.5px;line-height:24.5px;color:#242424;white-space:nowrap;-webkit-text-stroke:0.35px #242424;letter-spacing:0.293px;left:2381.50px;">Q2</div>
<div style="position:absolute;top:523.77px;font-size:24.5px;line-height:24.5px;color:#242424;white-space:nowrap;letter-spacing:0.806px;left:87.40px;">category</div>
<div style="position:absolute;left:49px;top:589px;width:2523px;height:681px;overflow:hidden;">
<div style="position:absolute;left:0.00px;top:0.00px;width:2523.00px;height:73.80px;background:#fafafa;"></div>
<div style="position:absolute;left:0.00px;top:73.80px;width:2523.00px;height:53.20px;background:#ffffff;"></div>
<div style="position:absolute;left:0.00px;top:127.00px;width:2523.00px;height:51.50px;background:#fafafa;"></div>
<div style="position:absolute;left:0.00px;top:178.50px;width:2523.00px;height:51.70px;background:#ffffff;"></div>
<div style="position:absolute;left:0.00px;top:230.20px;width:2523.00px;height:51.70px;background:#fafafa;"></div>
<div style="position:absolute;left:0.00px;top:281.90px;width:2523.00px;height:51.70px;background:#ffffff;"></div>
<div style="position:absolute;left:0.00px;top:333.60px;width:2523.00px;height:52.30px;background:#fafafa;"></div>
<div style="position:absolute;left:0.00px;top:385.90px;width:2523.00px;height:52.30px;background:#ffffff;"></div>
<div style="position:absolute;left:0.00px;top:438.20px;width:2523.00px;height:54.00px;background:#fafafa;"></div>
<div style="position:absolute;left:0.00px;top:492.20px;width:2523.00px;height:51.40px;background:#ffffff;"></div>
<div style="position:absolute;left:0.00px;top:543.60px;width:2523.00px;height:52.60px;background:#fafafa;"></div>
<div style="position:absolute;left:0.00px;top:596.20px;width:2523.00px;height:51.40px;background:#ffffff;"></div>
<div style="position:absolute;left:0.00px;top:647.60px;width:2523.00px;height:51.60px;background:#fafafa;"></div>
<div style="position:absolute;left:862.80px;top:0.00px;width:158.30px;height:73.80px;background:#e6edf6;"></div>
<div style="position:absolute;left:862.80px;top:73.80px;width:158.30px;height:53.20px;background:#ebf3fc;"></div>
<div style="position:absolute;left:862.80px;top:127.00px;width:158.30px;height:51.50px;background:#e6edf6;"></div>
<div style="position:absolute;left:862.80px;top:178.50px;width:158.30px;height:51.70px;background:#ebf3fc;"></div>
<div style="position:absolute;left:862.80px;top:230.20px;width:158.30px;height:51.70px;background:#e6edf6;"></div>
<div style="position:absolute;left:862.80px;top:281.90px;width:158.30px;height:51.70px;background:#ebf3fc;"></div>
<div style="position:absolute;left:862.80px;top:333.60px;width:158.30px;height:52.30px;background:#e6edf6;"></div>
<div style="position:absolute;left:862.80px;top:385.90px;width:158.30px;height:52.30px;background:#ebf3fc;"></div>
<div style="position:absolute;left:862.80px;top:438.20px;width:158.30px;height:54.00px;background:#e6edf6;"></div>
<div style="position:absolute;left:862.80px;top:492.20px;width:158.30px;height:51.40px;background:#ebf3fc;"></div>
<div style="position:absolute;left:862.80px;top:543.60px;width:158.30px;height:52.60px;background:#e6edf6;"></div>
<div style="position:absolute;left:862.80px;top:596.20px;width:158.30px;height:51.40px;background:#ebf3fc;"></div>
<div style="position:absolute;left:862.80px;top:647.60px;width:158.30px;height:51.60px;background:#e6edf6;"></div>
<div style="position:absolute;left:1502.80px;top:0.00px;width:158.20px;height:73.80px;background:#cdd5df;"></div>
<div style="position:absolute;left:1502.80px;top:73.80px;width:158.20px;height:53.20px;background:#cfd7e1;"></div>
<div style="position:absolute;left:1502.80px;top:127.00px;width:158.20px;height:51.50px;background:#cdd5df;"></div>
<div style="position:absolute;left:1502.80px;top:178.50px;width:158.20px;height:51.70px;background:#cfd7e1;"></div>
<div style="position:absolute;left:1502.80px;top:230.20px;width:158.20px;height:51.70px;background:#cdd5df;"></div>
<div style="position:absolute;left:1502.80px;top:281.90px;width:158.20px;height:51.70px;background:#cfd7e1;"></div>
<div style="position:absolute;left:1502.80px;top:333.60px;width:158.20px;height:52.30px;background:#cdd5df;"></div>
<div style="position:absolute;left:1502.80px;top:385.90px;width:158.20px;height:52.30px;background:#cfd7e1;"></div>
<div style="position:absolute;left:1502.80px;top:438.20px;width:158.20px;height:54.00px;background:#cdd5df;"></div>
<div style="position:absolute;left:1502.80px;top:492.20px;width:158.20px;height:51.40px;background:#cfd7e1;"></div>
<div style="position:absolute;left:1502.80px;top:543.60px;width:158.20px;height:52.60px;background:#cdd5df;"></div>
<div style="position:absolute;left:1502.80px;top:596.20px;width:158.20px;height:51.40px;background:#cfd7e1;"></div>
<div style="position:absolute;left:1502.80px;top:647.60px;width:158.20px;height:51.60px;background:#cdd5df;"></div>
<div style="position:absolute;left:2142.40px;top:0.00px;width:158.60px;height:73.80px;background:#e6edf6;"></div>
<div style="position:absolute;left:2142.40px;top:73.80px;width:158.60px;height:53.20px;background:#ebf3fc;"></div>
<div style="position:absolute;left:2142.40px;top:127.00px;width:158.60px;height:51.50px;background:#e6edf6;"></div>
<div style="position:absolute;left:2142.40px;top:178.50px;width:158.60px;height:51.70px;background:#ebf3fc;"></div>
<div style="position:absolute;left:2142.40px;top:230.20px;width:158.60px;height:51.70px;background:#e6edf6;"></div>
<div style="position:absolute;left:2142.40px;top:281.90px;width:158.60px;height:51.70px;background:#ebf3fc;"></div>
<div style="position:absolute;left:2142.40px;top:333.60px;width:158.60px;height:52.30px;background:#e6edf6;"></div>
<div style="position:absolute;left:2142.40px;top:385.90px;width:158.60px;height:52.30px;background:#ebf3fc;"></div>
<div style="position:absolute;left:2142.40px;top:438.20px;width:158.60px;height:54.00px;background:#e6edf6;"></div>
<div style="position:absolute;left:2142.40px;top:492.20px;width:158.60px;height:51.40px;background:#ebf3fc;"></div>
<div style="position:absolute;left:2142.40px;top:543.60px;width:158.60px;height:52.60px;background:#e6edf6;"></div>
<div style="position:absolute;left:2142.40px;top:596.20px;width:158.60px;height:51.40px;background:#ebf3fc;"></div>
<div style="position:absolute;left:2142.40px;top:647.60px;width:158.60px;height:51.60px;background:#e6edf6;"></div>
<div style="position:absolute;left:0.00px;top:72.80px;width:2523.00px;height:2.00px;background:#5e5e5e;"></div>
<div style="position:absolute;left:0.00px;top:177.50px;width:2523.00px;height:2.00px;background:#e6e6e6;"></div>
<div style="position:absolute;left:0.00px;top:229.20px;width:2523.00px;height:2.00px;background:#e6e6e6;"></div>
<div style="position:absolute;left:0.00px;top:280.90px;width:2523.00px;height:2.00px;background:#e6e6e6;"></div>
<div style="position:absolute;left:0.00px;top:332.60px;width:2523.00px;height:2.00px;background:#e6e6e6;"></div>
<div style="position:absolute;left:0.00px;top:384.90px;width:2523.00px;height:2.00px;background:#e6e6e6;"></div>
<div style="position:absolute;left:0.00px;top:437.20px;width:2523.00px;height:2.00px;background:#e6e6e6;"></div>
<div style="position:absolute;left:0.00px;top:542.60px;width:2523.00px;height:2.00px;background:#e6e6e6;"></div>
<div style="position:absolute;left:0.00px;top:595.20px;width:2523.00px;height:2.00px;background:#e6e6e6;"></div>
<div style="position:absolute;left:0.00px;top:646.60px;width:2523.00px;height:2.00px;background:#e6e6e6;"></div>
<div style="position:absolute;left:0.00px;top:698.20px;width:2523.00px;height:2.00px;background:#e6e6e6;"></div>
<div style="position:absolute;left:540.00px;top:0.00px;width:2.00px;height:681.00px;background:#e6e6e6;"></div>
<div style="position:absolute;left:700.20px;top:0.00px;width:2.00px;height:681.00px;background:#e6e6e6;"></div>
<div style="position:absolute;left:1180.60px;top:0.00px;width:2.00px;height:681.00px;background:#e6e6e6;"></div>
<div style="position:absolute;left:1340.00px;top:0.00px;width:2.00px;height:681.00px;background:#e6e6e6;"></div>
<div style="position:absolute;left:1820.00px;top:0.00px;width:2.00px;height:681.00px;background:#e6e6e6;"></div>
<div style="position:absolute;left:1980.00px;top:0.00px;width:2.00px;height:681.00px;background:#e6e6e6;"></div>
<div style="position:absolute;left:2460.20px;top:0.00px;width:2.00px;height:681.00px;background:#e6e6e6;"></div>
<div style="position:absolute;left:861.80px;top:0.00px;width:2.00px;height:681.00px;background:#0f6cbd;"></div>
<div style="position:absolute;left:1020.10px;top:0.00px;width:2.00px;height:681.00px;background:#0f6cbd;"></div>
<div style="position:absolute;left:1501.80px;top:0.00px;width:2.00px;height:681.00px;background:#0f6cbd;"></div>
<div style="position:absolute;left:1660.00px;top:0.00px;width:2.00px;height:681.00px;background:#0f6cbd;"></div>
<div style="position:absolute;left:2141.40px;top:0.00px;width:2.00px;height:681.00px;background:#0f6cbd;"></div>
<div style="position:absolute;left:2300.00px;top:0.00px;width:2.00px;height:681.00px;background:#0f6cbd;"></div>
<div style="position:absolute;top:27.38px;font-size:24.5px;line-height:24.5px;color:#242424;white-space:nowrap;font-weight:700;left:412.18px;">35,781.43</div>
<div style="position:absolute;top:27.38px;font-size:24.5px;line-height:24.5px;color:#242424;white-space:nowrap;font-weight:700;left:572.38px;">80,563.12</div>
<div style="position:absolute;top:27.38px;font-size:24.5px;line-height:24.5px;color:#242424;white-space:nowrap;font-weight:700;left:795.35px;">4.46</div>
<div style="position:absolute;top:27.38px;font-size:24.5px;line-height:24.5px;color:#242424;white-space:nowrap;font-weight:700;left:1052.77px;">35,781.43</div>
<div style="position:absolute;top:27.38px;font-size:24.5px;line-height:24.5px;color:#242424;white-space:nowrap;font-weight:700;left:1212.17px;">80,563.12</div>
<div style="position:absolute;top:27.38px;font-size:24.5px;line-height:24.5px;color:#242424;white-space:nowrap;font-weight:700;left:1435.35px;">4.46</div>
<div style="position:absolute;top:27.38px;font-size:24.5px;line-height:24.5px;color:#242424;white-space:nowrap;font-weight:700;left:1705.77px;">6,624.30</div>
<div style="position:absolute;top:27.38px;font-size:24.5px;line-height:24.5px;color:#242424;white-space:nowrap;font-weight:700;left:1852.17px;">12,824.30</div>
<div style="position:absolute;top:27.38px;font-size:24.5px;line-height:24.5px;color:#242424;white-space:nowrap;font-weight:700;left:2074.95px;">4.46</div>
<div style="position:absolute;top:27.38px;font-size:24.5px;line-height:24.5px;color:#242424;white-space:nowrap;font-weight:700;left:2345.97px;">4,477.69</div>
<div style="position:absolute;top:27.38px;font-size:24.5px;line-height:24.5px;color:#242424;white-space:nowrap;font-weight:700;left:2492.57px;">10,125.33</div>
<div style="position:absolute;top:92.17px;font-size:24.5px;line-height:24.5px;color:#242424;white-space:nowrap;font-weight:700;left:412.18px;">31,136.29</div>
<div style="position:absolute;top:92.17px;font-size:24.5px;line-height:24.5px;color:#242424;white-space:nowrap;font-weight:700;left:572.38px;">71,247.72</div>
<div style="position:absolute;top:92.17px;font-size:24.5px;line-height:24.5px;color:#242424;white-space:nowrap;font-weight:700;left:795.35px;">3,90</div>
<div style="position:absolute;top:92.17px;font-size:24.5px;line-height:24.5px;color:#242424;white-space:nowrap;font-weight:700;left:1853.52px;">11,847.72</div>
<div style="position:absolute;top:92.17px;font-size:24.5px;line-height:24.5px;color:#242424;white-space:nowrap;font-weight:700;left:2074.95px;">3.90</div>
<div style="position:absolute;top:92.17px;font-size:24.5px;line-height:24.5px;color:#242424;white-space:nowrap;font-weight:700;left:2345.97px;">3,924.70</div>
<div style="position:absolute;top:92.17px;font-size:24.5px;line-height:24.5px;color:#242424;white-space:nowrap;font-weight:700;left:2506.17px;">8,847.72</div>
<div style="position:absolute;top:142.88px;font-size:24.5px;line-height:24.5px;color:#242424;white-space:nowrap;left:425.77px;">2,963.94</div>
<div style="position:absolute;top:142.88px;font-size:24.5px;line-height:24.5px;color:#242424;white-space:nowrap;left:585.97px;">6,148.72</div>
<div style="position:absolute;top:142.88px;font-size:24.5px;line-height:24.5px;color:#242424;white-space:nowrap;left:795.35px;">0.37</div>
<div style="position:absolute;top:142.88px;font-size:24.5px;line-height:24.5px;color:#242424;white-space:nowrap;left:1886.23px;">748.72</div>
<div style="position:absolute;top:142.88px;font-size:24.5px;line-height:24.5px;color:#242424;white-space:nowrap;left:2074.95px;">0.37</div>
<div style="position:absolute;top:142.88px;font-size:24.5px;line-height:24.5px;color:#242424;white-space:nowrap;left:2366.43px;">376.91</div>
<div style="position:absolute;top:142.88px;font-size:24.5px;line-height:24.5px;color:#242424;white-space:nowrap;left:2526.63px;">748.72</div>
<div style="position:absolute;top:193.88px;font-size:24.5px;line-height:24.5px;color:#242424;white-space:nowrap;left:459.83px;">15.29</div>
<div style="position:absolute;top:193.88px;font-size:24.5px;line-height:24.5px;color:#242424;white-space:nowrap;left:620.03px;">34.70</div>
<div style="position:absolute;top:193.88px;font-size:24.5px;line-height:24.5px;color:#242424;white-space:nowrap;left:795.35px;">0.00</div>
<div style="position:absolute;top:193.88px;font-size:24.5px;line-height:24.5px;color:#242424;white-space:nowrap;left:1899.83px;">34.70</div>
<div style="position:absolute;top:193.88px;font-size:24.5px;line-height:24.5px;color:#242424;white-space:nowrap;left:2074.95px;">0.00</div>
<div style="position:absolute;top:193.88px;font-size:24.5px;line-height:24.5px;color:#242424;white-space:nowrap;left:2393.75px;">3.12</div>
<div style="position:absolute;top:193.88px;font-size:24.5px;line-height:24.5px;color:#242424;white-space:nowrap;left:2553.95px;">6.70</div>
<div style="position:absolute;top:246.07px;font-size:24.5px;line-height:24.5px;color:#242424;white-space:nowrap;left:425.77px;">1,965.63</div>
<div style="position:absolute;top:246.07px;font-size:24.5px;line-height:24.5px;color:#242424;white-space:nowrap;left:585.97px;">4,159.47</div>
<div style="position:absolute;top:246.07px;font-size:24.5px;line-height:24.5px;color:#242424;white-space:nowrap;left:795.35px;">0.25</div>
<div style="position:absolute;top:246.07px;font-size:24.5px;line-height:24.5px;color:#242424;white-space:nowrap;left:1886.23px;">559.47</div>
<div style="position:absolute;top:246.07px;font-size:24.5px;line-height:24.5px;color:#242424;white-space:nowrap;left:2074.95px;">0.25</div>
<div style="position:absolute;top:246.07px;font-size:24.5px;line-height:24.5px;color:#242424;white-space:nowrap;left:2366.43px;">248.34</div>
<div style="position:absolute;top:246.07px;font-size:24.5px;line-height:24.5px;color:#242424;white-space:nowrap;left:2526.63px;">559.47</div>
<div style="position:absolute;top:298.47px;font-size:24.5px;line-height:24.5px;color:#242424;white-space:nowrap;left:425.77px;">3,865.82</div>
<div style="position:absolute;top:298.47px;font-size:24.5px;line-height:24.5px;color:#242424;white-space:nowrap;left:585.97px;">8,222.46</div>
<div style="position:absolute;top:298.47px;font-size:24.5px;line-height:24.5px;color:#242424;white-space:nowrap;left:795.35px;">0.49</div>
<div style="position:absolute;top:298.47px;font-size:24.5px;line-height:24.5px;color:#242424;white-space:nowrap;left:1865.77px;">1,022.46</div>
<div style="position:absolute;top:298.47px;font-size:24.5px;line-height:24.5px;color:#242424;white-space:nowrap;left:2074.95px;">0.49</div>
<div style="position:absolute;top:298.47px;font-size:24.5px;line-height:24.5px;color:#242424;white-space:nowrap;left:2366.43px;">490.07</div>
<div style="position:absolute;top:298.47px;font-size:24.5px;line-height:24.5px;color:#242424;white-space:nowrap;left:2506.17px;">1,022.46</div>
<div style="position:absolute;top:350.47px;font-size:24.5px;line-height:24.5px;color:#242424;white-space:nowrap;left:425.77px;">5,213.68</div>
<div style="position:absolute;top:350.47px;font-size:24.5px;line-height:24.5px;color:#242424;white-space:nowrap;left:574.21px;">11,096.62</div>
<div style="position:absolute;top:350.47px;font-size:24.5px;line-height:24.5px;color:#242424;white-space:nowrap;left:795.35px;">0.65</div>
<div style="position:absolute;top:350.47px;font-size:24.5px;line-height:24.5px;color:#242424;white-space:nowrap;left:1865.77px;">1,396.62</div>
<div style="position:absolute;top:350.47px;font-size:24.5px;line-height:24.5px;color:#242424;white-space:nowrap;left:2074.95px;">0.65</div>
<div style="position:absolute;top:350.47px;font-size:24.5px;line-height:24.5px;color:#242424;white-space:nowrap;left:2366.43px;">656.18</div>
<div style="position:absolute;top:350.47px;font-size:24.5px;line-height:24.5px;color:#242424;white-space:nowrap;left:2506.17px;">1,396.62</div>
<div style="position:absolute;top:402.18px;font-size:24.5px;line-height:24.5px;color:#242424;white-space:nowrap;left:415.85px;">17,111.93</div>
<div style="position:absolute;top:402.18px;font-size:24.5px;line-height:24.5px;color:#242424;white-space:nowrap;left:572.38px;">39,205.74</div>
<div style="position:absolute;top:402.18px;font-size:24.5px;line-height:24.5px;color:#242424;white-space:nowrap;left:795.35px;">2.13</div>
<div style="position:absolute;top:402.18px;font-size:24.5px;line-height:24.5px;color:#242424;white-space:nowrap;left:1865.77px;">4,905.74</div>
<div style="position:absolute;top:402.18px;font-size:24.5px;line-height:24.5px;color:#242424;white-space:nowrap;left:2074.95px;">2.13</div>
<div style="position:absolute;top:402.18px;font-size:24.5px;line-height:24.5px;color:#242424;white-space:nowrap;left:2345.97px;">2,150.08</div>
<div style="position:absolute;top:402.18px;font-size:24.5px;line-height:24.5px;color:#242424;white-space:nowrap;left:2506.17px;">4,905.74</div>
<div style="position:absolute;top:457.88px;font-size:24.5px;line-height:24.5px;color:#242424;white-space:nowrap;font-weight:700;left:425.77px;">2,396.60</div>
<div style="position:absolute;top:457.88px;font-size:24.5px;line-height:24.5px;color:#242424;white-space:nowrap;font-weight:700;left:585.97px;">4,796.27</div>
<div style="position:absolute;top:457.88px;font-size:24.5px;line-height:24.5px;color:#242424;white-space:nowrap;font-weight:700;left:795.35px;">0.30</div>
<div style="position:absolute;top:457.88px;font-size:24.5px;line-height:24.5px;color:#242424;white-space:nowrap;font-weight:700;left:1886.23px;">596.27</div>
<div style="position:absolute;top:457.88px;font-size:24.5px;line-height:24.5px;color:#242424;white-space:nowrap;font-weight:700;left:2074.95px;">0.30</div>
<div style="position:absolute;top:457.88px;font-size:24.5px;line-height:24.5px;color:#242424;white-space:nowrap;font-weight:700;left:2366.43px;">292.04</div>
<div style="position:absolute;top:457.88px;font-size:24.5px;line-height:24.5px;color:#242424;white-space:nowrap;font-weight:700;left:2526.63px;">596.27</div>
<div style="position:absolute;top:508.77px;font-size:24.5px;line-height:24.5px;color:#242424;white-space:nowrap;left:446.23px;">591.65</div>
<div style="position:absolute;top:508.77px;font-size:24.5px;line-height:24.5px;color:#242424;white-space:nowrap;left:585.97px;">1,150.06</div>
<div style="position:absolute;top:508.77px;font-size:24.5px;line-height:24.5px;color:#242424;white-space:nowrap;left:795.35px;">0.07</div>
<div style="position:absolute;top:508.77px;font-size:24.5px;line-height:24.5px;color:#242424;white-space:nowrap;left:1886.23px;">150.06</div>
<div style="position:absolute;top:508.77px;font-size:24.5px;line-height:24.5px;color:#242424;white-space:nowrap;left:2074.95px;">0.07</div>
<div style="position:absolute;top:508.77px;font-size:24.5px;line-height:24.5px;color:#242424;white-space:nowrap;left:2380.03px;">72.39</div>
<div style="position:absolute;top:508.77px;font-size:24.5px;line-height:24.5px;color:#242424;white-space:nowrap;left:2526.63px;">150.06</div>
<div style="position:absolute;top:560.08px;font-size:24.5px;line-height:24.5px;color:#242424;white-space:nowrap;left:446.23px;">953.39</div>
<div style="position:absolute;top:560.08px;font-size:24.5px;line-height:24.5px;color:#242424;white-space:nowrap;left:585.97px;">1,840.54</div>
<div style="position:absolute;top:560.08px;font-size:24.5px;line-height:24.5px;color:#242424;white-space:nowrap;left:795.35px;">0.12</div>
<div style="position:absolute;top:560.08px;font-size:24.5px;line-height:24.5px;color:#242424;white-space:nowrap;left:1886.23px;">240.54</div>
<div style="position:absolute;top:560.08px;font-size:24.5px;line-height:24.5px;color:#242424;white-space:nowrap;left:2074.95px;">0.12</div>
<div style="position:absolute;top:560.08px;font-size:24.5px;line-height:24.5px;color:#242424;white-space:nowrap;left:2368.27px;">115.68</div>
<div style="position:absolute;top:560.08px;font-size:24.5px;line-height:24.5px;color:#242424;white-space:nowrap;left:2526.63px;">240.54</div>
<div style="position:absolute;top:612.58px;font-size:24.5px;line-height:24.5px;color:#242424;white-space:nowrap;left:446.23px;">362.90</div>
<div style="position:absolute;top:612.58px;font-size:24.5px;line-height:24.5px;color:#242424;white-space:nowrap;left:606.43px;">726.44</div>
<div style="position:absolute;top:612.58px;font-size:24.5px;line-height:24.5px;color:#242424;white-space:nowrap;left:795.35px;">0.36</div>
<div style="position:absolute;top:612.58px;font-size:24.5px;line-height:24.5px;color:#242424;white-space:nowrap;left:926.33px;">180.72</div>
<div style="position:absolute;top:612.58px;font-size:24.5px;line-height:24.5px;color:#242424;white-space:nowrap;left:1086.83px;">180.72</div>
<div style="position:absolute;top:612.58px;font-size:24.5px;line-height:24.5px;color:#242424;white-space:nowrap;left:1246.23px;">366.43</div>
<div style="position:absolute;top:612.58px;font-size:24.5px;line-height:24.5px;color:#242424;white-space:nowrap;left:1435.35px;">0.18</div>
<div style="position:absolute;top:612.58px;font-size:24.5px;line-height:24.5px;color:#242424;white-space:nowrap;left:1566.23px;">180.72</div>
<div style="position:absolute;top:612.58px;font-size:24.5px;line-height:24.5px;color:#242424;white-space:nowrap;left:1739.83px;">44.39</div>
<div style="position:absolute;top:612.58px;font-size:24.5px;line-height:24.5px;color:#242424;white-space:nowrap;left:1899.83px;">89.76</div>
<div style="position:absolute;top:612.58px;font-size:24.5px;line-height:24.5px;color:#242424;white-space:nowrap;left:2074.95px;">0.04</div>
<div style="position:absolute;top:612.58px;font-size:24.5px;line-height:24.5px;color:#242424;white-space:nowrap;left:2380.03px;">45.36</div>
<div style="position:absolute;top:612.58px;font-size:24.5px;line-height:24.5px;color:#242424;white-space:nowrap;left:2540.23px;">91.20</div>
<div style="position:absolute;top:663.97px;font-size:24.5px;line-height:24.5px;color:#242424;white-space:nowrap;left:446.23px;">488.65</div>
<div style="position:absolute;top:663.97px;font-size:24.5px;line-height:24.5px;color:#242424;white-space:nowrap;left:606.43px;">969.60</div>
<div style="position:absolute;top:663.97px;font-size:24.5px;line-height:24.5px;color:#242424;white-space:nowrap;left:795.35px;">0.49</div>
<div style="position:absolute;top:663.97px;font-size:24.5px;line-height:24.5px;color:#242424;white-space:nowrap;left:926.33px;">249.43</div>
<div style="position:absolute;top:663.97px;font-size:24.5px;line-height:24.5px;color:#242424;white-space:nowrap;left:1086.83px;">249.43</div>
<div style="position:absolute;top:663.97px;font-size:24.5px;line-height:24.5px;color:#242424;white-space:nowrap;left:1246.23px;">491.49</div>
<div style="position:absolute;top:663.97px;font-size:24.5px;line-height:24.5px;color:#242424;white-space:nowrap;left:1435.35px;">0.25</div>
<div style="position:absolute;top:663.97px;font-size:24.5px;line-height:24.5px;color:#242424;white-space:nowrap;left:1566.23px;">249.43</div>
<div style="position:absolute;top:663.97px;font-size:24.5px;line-height:24.5px;color:#242424;white-space:nowrap;left:1739.83px;">60.91</div>
<div style="position:absolute;top:663.97px;font-size:24.5px;line-height:24.5px;color:#242424;white-space:nowrap;left:1888.07px;">115.91</div>
<div style="position:absolute;top:663.97px;font-size:24.5px;line-height:24.5px;color:#242424;white-space:nowrap;left:2074.95px;">0.06</div>
<div style="position:absolute;top:663.97px;font-size:24.5px;line-height:24.5px;color:#242424;white-space:nowrap;left:2380.03px;">58.62</div>
<div style="position:absolute;top:663.97px;font-size:24.5px;line-height:24.5px;color:#242424;white-space:nowrap;left:2528.47px;">118.30</div>
</div>
<div style="position:absolute;left:49.00px;top:588.00px;width:2538.00px;height:2.00px;background:#a0a0a0;"></div>
<div style="position:absolute;left:48.50px;top:479.00px;width:2.00px;height:791.00px;background:#e3e3e3;"></div>
<div style="position:absolute;left:429.00px;top:328.00px;width:2.00px;height:942.00px;background:#9a9a9a;"></div>
<div style="position:absolute;left:589.00px;top:479.00px;width:2.00px;height:110.00px;background:#e3e3e3;"></div>
<div style="position:absolute;left:749.20px;top:479.00px;width:2.00px;height:110.00px;background:#e3e3e3;"></div>
<div style="position:absolute;left:1229.60px;top:479.00px;width:2.00px;height:110.00px;background:#e3e3e3;"></div>
<div style="position:absolute;left:1389.00px;top:479.00px;width:2.00px;height:110.00px;background:#e3e3e3;"></div>
<div style="position:absolute;left:1869.00px;top:479.00px;width:2.00px;height:110.00px;background:#e3e3e3;"></div>
<div style="position:absolute;left:2029.00px;top:479.00px;width:2.00px;height:110.00px;background:#e3e3e3;"></div>
<div style="position:absolute;left:2509.20px;top:479.00px;width:2.00px;height:110.00px;background:#e3e3e3;"></div>
<div style="position:absolute;left:910.80px;top:478.50px;width:160.30px;height:112.00px;background:#deecf9;border:2px solid #0f6cbd;"></div>
<div style="position:absolute;left:1550.80px;top:478.50px;width:160.20px;height:112.00px;background:#c9d6e4;border:2px solid #0f6cbd;"></div>
<div style="position:absolute;left:2190.40px;top:478.50px;width:160.60px;height:112.00px;background:#deecf9;border:2px solid #0f6cbd;"></div>
<div style="position:absolute;left:0;top:0;width:2587px;height:600px;overflow:hidden">
<div style="position:absolute;top:507.68px;font-size:24.5px;line-height:24.5px;color:#242424;white-space:nowrap;letter-spacing:-0.354px;left:485.70px;">Revenue</div>
<div style="position:absolute;top:544.90px;font-size:22px;line-height:22px;color:#242424;white-space:nowrap;letter-spacing:0.172px;left:483.40px;">in Millions</div>
<div style="position:absolute;top:507.68px;font-size:24.5px;line-height:24.5px;color:#242424;white-space:nowrap;letter-spacing:-1.984px;left:675.70px;">COGS</div>
<div style="position:absolute;top:544.90px;font-size:22px;line-height:22px;color:#242424;white-space:nowrap;letter-spacing:-0.334px;left:613.90px;">in Thousands</div>
<div style="position:absolute;top:490.38px;font-size:24.5px;line-height:24.5px;color:#242424;white-space:nowrap;letter-spacing:-0.723px;left:841.10px;">Gross</div>
<div style="position:absolute;top:524.47px;font-size:24.5px;line-height:24.5px;color:#242424;white-space:nowrap;letter-spacing:0.659px;left:843.00px;">Profit</div>
<div style="position:absolute;top:561.10px;font-size:22px;line-height:22px;color:#242424;white-space:nowrap;letter-spacing:-0.165px;left:812.20px;">in Billions</div>
<div style="position:absolute;top:519.75px;font-size:25px;line-height:25px;color:#666666;white-space:nowrap;font-style:italic;left:756.20px;font-family:'Liberation Serif',serif;">fx</div>
<div style="position:absolute;top:507.68px;font-size:24.5px;line-height:24.5px;color:#242424;white-space:nowrap;letter-spacing:-0.258px;left:968.30px;">Forecast</div>
<div style="position:absolute;top:544.90px;font-size:22px;line-height:22px;color:#242424;white-space:nowrap;letter-spacing:0.172px;left:963.50px;">in Millions</div>
<div style="position:absolute;top:522.10px;font-size:24px;line-height:24px;color:#555;white-space:nowrap;font-style:italic;left:919.80px;font-family:'Liberation Serif',serif;">#</div>
<div style="position:absolute;top:507.68px;font-size:24.5px;line-height:24.5px;color:#242424;white-space:nowrap;letter-spacing:-0.354px;left:1126.30px;">Revenue</div>
<div style="position:absolute;top:544.90px;font-size:22px;line-height:22px;color:#242424;white-space:nowrap;letter-spacing:0.172px;left:1124.00px;">in Millions</div>
<div style="position:absolute;top:507.68px;font-size:24.5px;line-height:24.5px;color:#242424;white-space:nowrap;letter-spacing:-1.984px;left:1315.50px;">COGS</div>
<div style="position:absolute;top:544.90px;font-size:22px;line-height:22px;color:#242424;white-space:nowrap;letter-spacing:-0.334px;left:1253.70px;">in Thousands</div>
<div style="position:absolute;top:490.38px;font-size:24.5px;line-height:24.5px;color:#242424;white-space:nowrap;letter-spacing:-0.723px;left:1481.10px;">Gross</div>
<div style="position:absolute;top:524.47px;font-size:24.5px;line-height:24.5px;color:#242424;white-space:nowrap;letter-spacing:0.659px;left:1483.00px;">Profit</div>
<div style="position:absolute;top:561.10px;font-size:22px;line-height:22px;color:#242424;white-space:nowrap;letter-spacing:-0.165px;left:1452.20px;">in Billions</div>
<div style="position:absolute;top:519.75px;font-size:25px;line-height:25px;color:#666666;white-space:nowrap;font-style:italic;left:1396.00px;font-family:'Liberation Serif',serif;">fx</div>
<div style="position:absolute;top:507.68px;font-size:24.5px;line-height:24.5px;color:#242424;white-space:nowrap;letter-spacing:-0.258px;left:1608.20px;">Forecast</div>
<div style="position:absolute;top:544.90px;font-size:22px;line-height:22px;color:#242424;white-space:nowrap;letter-spacing:0.172px;left:1603.40px;">in Millions</div>
<div style="position:absolute;top:522.10px;font-size:24px;line-height:24px;color:#555;white-space:nowrap;font-style:italic;left:1559.80px;font-family:'Liberation Serif',serif;">#</div>
<div style="position:absolute;top:507.68px;font-size:24.5px;line-height:24.5px;color:#242424;white-space:nowrap;letter-spacing:-0.354px;left:1765.70px;">Revenue</div>
<div style="position:absolute;top:544.90px;font-size:22px;line-height:22px;color:#242424;white-space:nowrap;letter-spacing:0.172px;left:1763.40px;">in Millions</div>
<div style="position:absolute;top:507.68px;font-size:24.5px;line-height:24.5px;color:#242424;white-space:nowrap;letter-spacing:-1.984px;left:1955.50px;">COGS</div>
<div style="position:absolute;top:544.90px;font-size:22px;line-height:22px;color:#242424;white-space:nowrap;letter-spacing:-0.334px;left:1893.70px;">in Thousands</div>
<div style="position:absolute;top:490.38px;font-size:24.5px;line-height:24.5px;color:#242424;white-space:nowrap;letter-spacing:-0.723px;left:2120.70px;">Gross</div>
<div style="position:absolute;top:524.47px;font-size:24.5px;line-height:24.5px;color:#242424;white-space:nowrap;letter-spacing:0.659px;left:2122.60px;">Profit</div>
<div style="position:absolute;top:561.10px;font-size:22px;line-height:22px;color:#242424;white-space:nowrap;letter-spacing:-0.165px;left:2091.80px;">in Billions</div>
<div style="position:absolute;top:519.75px;font-size:25px;line-height:25px;color:#666666;white-space:nowrap;font-style:italic;left:2036.00px;font-family:'Liberation Serif',serif;">fx</div>
<div style="position:absolute;top:507.68px;font-size:24.5px;line-height:24.5px;color:#242424;white-space:nowrap;letter-spacing:-0.258px;left:2248.20px;">Forecast</div>
<div style="position:absolute;top:544.90px;font-size:22px;line-height:22px;color:#242424;white-space:nowrap;letter-spacing:0.172px;left:2243.40px;">in Millions</div>
<div style="position:absolute;top:522.10px;font-size:24px;line-height:24px;color:#555;white-space:nowrap;font-style:italic;left:2199.40px;font-family:'Liberation Serif',serif;">#</div>
<div style="position:absolute;top:507.68px;font-size:24.5px;line-height:24.5px;color:#242424;white-space:nowrap;letter-spacing:-0.354px;left:2405.90px;">Revenue</div>
<div style="position:absolute;top:544.90px;font-size:22px;line-height:22px;color:#242424;white-space:nowrap;letter-spacing:0.172px;left:2403.60px;">in Millions</div>
<div style="position:absolute;top:507.68px;font-size:24.5px;line-height:24.5px;color:#242424;white-space:nowrap;letter-spacing:-1.984px;left:2595.90px;">COGS</div>
<div style="position:absolute;top:544.90px;font-size:22px;line-height:22px;color:#242424;white-space:nowrap;letter-spacing:-0.334px;left:2534.10px;">in Thousands</div>
</div>
<div style="position:absolute;top:616.38px;font-size:24.5px;line-height:24.5px;color:#242424;white-space:nowrap;font-weight:700;letter-spacing:-0.98px;left:93.50px;">All</div>
<div style="position:absolute;left:64.20px;top:616.60px;width:16.30px;height:16.30px;border:2px solid #3a3a3a;"></div>
<div style="position:absolute;left:68.20px;top:624.00px;width:8.30px;height:1.30px;background:#3a3a3a;"></div>
<div style="position:absolute;top:681.17px;font-size:24.5px;line-height:24.5px;color:#242424;white-space:nowrap;font-weight:700;letter-spacing:-0.771px;left:93.50px;">Beer</div>
<div style="position:absolute;left:64.20px;top:681.40px;width:16.30px;height:16.30px;border:2px solid #3a3a3a;"></div>
<div style="position:absolute;left:68.20px;top:688.80px;width:8.30px;height:1.30px;background:#3a3a3a;"></div>
<div style="position:absolute;top:731.88px;font-size:24.5px;line-height:24.5px;color:#242424;white-space:nowrap;letter-spacing:0.599px;left:103.60px;">Artisan Ale</div>
<div style="position:absolute;top:782.88px;font-size:24.5px;line-height:24.5px;color:#242424;white-space:nowrap;letter-spacing:0.126px;left:103.60px;">Cosmic Craft Brews</div>
<div style="position:absolute;top:835.07px;font-size:24.5px;line-height:24.5px;color:#242424;white-space:nowrap;letter-spacing:0.174px;left:103.60px;">Eclipse Light</div>
<div style="position:absolute;top:887.47px;font-size:24.5px;line-height:24.5px;color:#242424;white-space:nowrap;letter-spacing:0.873px;left:103.60px;">Old Mill Stout</div>
<div style="position:absolute;top:939.47px;font-size:24.5px;line-height:24.5px;color:#242424;white-space:nowrap;letter-spacing:0.151px;left:103.60px;">Riverbend IPA</div>
<div style="position:absolute;top:991.17px;font-size:24.5px;line-height:24.5px;color:#242424;white-space:nowrap;letter-spacing:0.499px;left:103.60px;">Summit Lager</div>
<div style="position:absolute;top:1046.88px;font-size:24.5px;line-height:24.5px;color:#242424;white-space:nowrap;font-weight:700;letter-spacing:0.104px;left:93.50px;">Hard Seltzer</div>
<div style="position:absolute;left:64.20px;top:1047.10px;width:16.30px;height:16.30px;border:2px solid #3a3a3a;"></div>
<div style="position:absolute;left:68.20px;top:1054.50px;width:8.30px;height:1.30px;background:#3a3a3a;"></div>
<div style="position:absolute;top:1097.77px;font-size:24.5px;line-height:24.5px;color:#242424;white-space:nowrap;letter-spacing:0.136px;left:103.60px;">AquaSplash</div>
<div style="position:absolute;top:1149.08px;font-size:24.5px;line-height:24.5px;color:#242424;white-space:nowrap;letter-spacing:-0.776px;left:103.60px;">FizzJoy</div>
<div style="position:absolute;top:1201.58px;font-size:24.5px;line-height:24.5px;color:#242424;white-space:nowrap;letter-spacing:0.27px;left:103.60px;">FruitWave</div>
<div style="position:absolute;top:1252.97px;font-size:24.5px;line-height:24.5px;color:#242424;white-space:nowrap;letter-spacing:0.418px;left:103.60px;">Zenith Seltzer</div>
<div style="position:absolute;left:21.00px;top:1270.00px;width:2566.00px;height:44.00px;background:#fff;"></div>
<div style="position:absolute;left:49.00px;top:1270.00px;width:2523.00px;height:16.00px;background:#f6f6f6;border-radius:8px;"></div>
<div style="position:absolute;left:49.00px;top:1270.00px;width:938.00px;height:16.00px;background:#ababab;border-radius:8px;"></div>
<div style="position:absolute;left:2572.50px;top:591.00px;width:14.50px;height:313.00px;background:#ababab;border-radius:7px;"></div>
<div style="position:absolute;left:21.00px;top:1313.50px;width:2566.00px;height:2.00px;background:#dedede;"></div>
<div style="position:absolute;left:21.00px;top:1315.50px;width:2566.00px;height:52.00px;background:#f5f5f5;"></div>
<div style="position:absolute;left:21.00px;top:1367.00px;width:2776.00px;height:2.00px;background:#dedede;"></div>
<div style="position:absolute;top:1333.10px;font-size:22px;line-height:22px;color:#424242;white-space:nowrap;letter-spacing:-0.063px;left:41.70px;">Rows: 21</div>
<div style="position:absolute;top:1333.10px;font-size:22px;line-height:22px;color:#424242;white-space:nowrap;letter-spacing:0.505px;left:154.70px;">Columns: 177</div>
<svg style="position:absolute;left:2070px;top:1318px;overflow:visible" width="520" height="50" viewBox="2070 1318 520 50" fill="none"><path d="M2084.1 1344.5 L2104.3 1344.5" stroke="#444" stroke-width="2"/><path d="M2139.5 1344.8 L2334.5 1344.8" stroke="#c8c8c8" stroke-width="4" stroke-linecap="round"/><path d="M2139.5 1344.8 L2223 1344.8" stroke="#2e7d6c" stroke-width="4" stroke-linecap="round"/><circle cx="2223" cy="1344.8" r="16.5" fill="#fff"/><circle cx="2223" cy="1344.8" r="14" fill="#2e7d6c"/><path d="M2356 1344.8 L2377.4 1344.8 M2366.7 1334.1 L2366.7 1355.5" stroke="#333" stroke-width="2"/><path d="M2568.76 1337.50 L2573.29 1337.72 L2573.29 1343.88 L2568.76 1344.10 L2566.29 1348.38 L2568.36 1352.42 L2563.03 1355.50 L2560.57 1351.68 L2555.63 1351.68 L2553.17 1355.50 L2547.84 1352.42 L2549.91 1348.38 L2547.44 1344.10 L2542.91 1343.88 L2542.91 1337.72 L2547.44 1337.50 L2549.91 1333.22 L2547.84 1329.18 L2553.17 1326.10 L2555.63 1329.92 L2560.57 1329.92 L2563.03 1326.10 L2568.36 1329.18 L2566.29 1333.22 Z" stroke="#333" stroke-width="2" stroke-linejoin="round"/><circle cx="2558.1" cy="1340.8" r="3.88" stroke="#117865" stroke-width="2"/></svg>
<div style="position:absolute;left:2408.10px;top:1323.00px;width:109.60px;height:38.00px;background:#fff;border:1.5px solid #cfcfcf;border-bottom:2px solid #555;border-radius:7px;"></div>
<div style="position:absolute;top:1333.60px;font-size:22px;line-height:22px;color:#242424;white-space:nowrap;letter-spacing:-0.5px;left:1714.00px;width:1500px;text-align:center;">100 %</div>
<div style="position:absolute;left:21.00px;top:1369.00px;width:2776.00px;height:87.00px;background:#fff;border-bottom-left-radius:16px;border-bottom-right-radius:16px;"></div>
<div style="position:absolute;left:37.30px;top:1382.30px;width:352.00px;height:64.00px;background:#ebebeb;border-radius:9px;"></div>
<div style="position:absolute;top:1401.80px;font-size:28px;line-height:28px;color:#242424;white-space:nowrap;letter-spacing:-0.622px;left:102.30px;">Planning 1</div>
<svg style="position:absolute;left:40px;top:1385px;overflow:visible" width="420" height="60" viewBox="40 1385 420 60" fill="none"><circle cx="67.4" cy="1415.5" r="12.3" stroke="#3d3d3d" stroke-width="4.2"/><circle cx="67.4" cy="1415.5" r="5.5" stroke="#3d3d3d" stroke-width="3.4"/><path d="M67.4 1415.5 L81 1402" stroke="#ebebeb" stroke-width="4.5"/><path d="M67.4 1415.5 L80.5 1402.5" stroke="#3d3d3d" stroke-width="2"/><path d="M77 1400.5 L80.5 1398.5 L84.5 1402.5 L82.5 1406 Z" fill="#3d3d3d"/><path d="M346.2 1410.6 L364.1 1410.6 L355.15 1420.1 Z" fill="#444"/><path d="M431 1398 L431 1429.4 M415 1413.9 L446.8 1413.9" stroke="#242424" stroke-width="2.1"/></svg>
<div style="position:absolute;left:389.50px;top:1394.00px;width:1.50px;height:40.00px;background:#d6d6d6;"></div>
<svg style="position:absolute;left:2590px;top:1385px;overflow:visible" width="200" height="60" viewBox="2590 1385 200 60" fill="none"><path d="M2630.29 1410.76 L2634.32 1410.96 L2634.32 1416.44 L2630.29 1416.64 L2628.09 1420.45 L2629.94 1424.04 L2625.19 1426.78 L2623.00 1423.39 L2618.60 1423.39 L2616.41 1426.78 L2611.66 1424.04 L2613.51 1420.45 L2611.31 1416.64 L2607.28 1416.44 L2607.28 1410.96 L2611.31 1410.76 L2613.51 1406.95 L2611.66 1403.36 L2616.41 1400.62 L2618.60 1404.01 L2623.00 1404.01 L2625.19 1400.62 L2629.94 1403.36 L2628.09 1406.95 Z" stroke="#333" stroke-width="2" stroke-linejoin="round"/><circle cx="2620.8" cy="1413.7" r="3.45" stroke="#333" stroke-width="2"/><path d="M2687 1427.3 L2679.4 1427.3 Q2675.4 1427.3 2675.4 1423.3 L2675.4 1400.5 Q2675.4 1396.5 2679.4 1396.5 L2694.3 1396.5 Q2698.3 1396.5 2698.3 1400.5 L2698.3 1410" stroke="#333" stroke-width="2"/><path d="M2681 1404.8 L2693 1404.8 M2681 1413 L2688 1413" stroke="#333" stroke-width="2"/><circle cx="2696" cy="1420.9" r="9" fill="#117865"/><path d="M2691.32 1420.9 L2700.68 1420.9 M2696 1416.22 L2696 1425.5800000000002" stroke="#fff" stroke-width="2.2"/><rect x="2757.7" y="1406.4" width="22.5" height="22.9" rx="5" stroke="#1f1f1f" stroke-width="2.2"/><path d="M2754 1424.5 Q2753 1423 2753 1420 L2753 1410 Q2753 1402 2761 1402 L2774 1402" stroke="#1f1f1f" stroke-width="2"/><path d="M2750 1420 Q2749 1418 2749 1415 L2749 1407 Q2749 1398 2758 1398 L2770 1398" stroke="#1f1f1f" stroke-width="2"/></svg>
<div style="position:absolute;left:653.50px;top:207.00px;width:1300.50px;height:968.00px;background:#fff;border-radius:10px;box-shadow:0 4px 12px rgba(0,0,0,0.20), 0 0 2px rgba(0,0,0,0.10);"></div>
<div style="position:absolute;top:262.65px;font-size:35.7px;line-height:35.7px;color:#242424;white-space:nowrap;-webkit-text-stroke:0.6px #242424;letter-spacing:0.032px;left:703.40px;">Period Setup</div>
<svg style="position:absolute;left:1880.00px;top:263.00px;" width="28" height="28" viewBox="0 0 28 28" fill="none"><path d="M2.5 2.5 L25.5 25.5 M25.5 2.5 L2.5 25.5" stroke="#2b2b2b" stroke-width="2.4"/></svg>
<div style="position:absolute;left:702.00px;top:323.00px;width:1204.00px;height:719.00px;border:2px solid #dcdcdc;"></div>
<div style="position:absolute;left:702.00px;top:323.00px;width:369.00px;height:719.00px;border:3.6px solid #dcdcdc;border-right:none;"></div>
<div style="position:absolute;left:1069.50px;top:323.00px;width:2.00px;height:719.00px;background:#dcdcdc;"></div>
<svg style="position:absolute;left:725.00px;top:358.00px;" width="26" height="16" viewBox="0 0 26 16" fill="none"><path d="M1.5 1.5 L13 13 L24.5 1.5" stroke="#e6e6e6" stroke-width="2"/></svg>
<div style="position:absolute;top:357.15px;font-size:23px;line-height:23px;color:#242424;white-space:nowrap;letter-spacing:-0.153px;left:761.50px;">Forecast</div>
<div style="position:absolute;left:705.50px;top:405.00px;width:364.00px;height:2.00px;background:#e3e3e3;"></div>
<div style="position:absolute;left:705.50px;top:407.00px;width:364.00px;height:64.50px;background:#ebf3fc;"></div>
<div style="position:absolute;left:741.60px;top:470.50px;width:328.00px;height:2.00px;background:#e3e3e3;"></div>
<div style="position:absolute;top:429.30px;font-size:24px;line-height:24px;color:#242424;white-space:nowrap;letter-spacing:-0.034px;left:762.20px;">Jan 2025 - Mar 2025</div>
<div style="position:absolute;top:503.40px;font-size:24px;line-height:24px;color:#117865;white-space:nowrap;-webkit-text-stroke:0.45px #117865;letter-spacing:0.096px;left:764.40px;">+ Add Range</div>
<div style="position:absolute;top:351.48px;font-size:35.2px;line-height:35.2px;color:#242424;white-space:nowrap;-webkit-text-stroke:0.7px #242424;letter-spacing:0.006px;left:1093.00px;">Set Period Range</div>
<div style="position:absolute;top:415.40px;font-size:24px;line-height:24px;color:#242424;white-space:nowrap;-webkit-text-stroke:0.45px #242424;letter-spacing:0.017px;left:1093.00px;">Target Period</div>
<div style="position:absolute;left:1092.40px;top:455.30px;width:791.00px;height:63.00px;border:2px solid #cfcfcf;border-radius:9px;background:#fff;"></div>
<div style="position:absolute;top:476.25px;font-size:27px;line-height:27px;color:#424242;white-space:nowrap;letter-spacing:0.016px;left:1115.20px;">Jan 2025 - Mar 2025</div>
<div style="position:absolute;top:549.80px;font-size:24px;line-height:24px;color:#242424;white-space:nowrap;-webkit-text-stroke:0.45px #242424;letter-spacing:-0.272px;left:1092.40px;">Copy Source</div>
<div style="position:absolute;left:1092.40px;top:590.00px;width:791.00px;height:62.00px;border:2px solid #cfcfcf;border-radius:9px;background:#fff;"></div>
<div style="position:absolute;top:612.35px;font-size:23px;line-height:23px;color:#242424;white-space:nowrap;letter-spacing:-0.669px;left:1119.50px;">Revenue</div>
<svg style="position:absolute;left:1829.00px;top:612.00px;" width="27" height="17" viewBox="0 0 27 17" fill="none"><path d="M1.5 1.5 L13.5 13.5 L25.5 1.5" stroke="#2b2b2b" stroke-width="2"/></svg>
<div style="position:absolute;left:1076.70px;top:668.40px;width:413.00px;height:144.20px;border:4px solid #f7306e;border-radius:7px;"></div>
<div style="position:absolute;top:683.40px;font-size:24px;line-height:24px;color:#242424;white-space:nowrap;-webkit-text-stroke:0.45px #242424;letter-spacing:0.466px;left:1093.40px;">Apply Operation</div>
<div style="position:absolute;left:1092.70px;top:723.50px;width:378.60px;height:62.40px;border:2px solid #cfcfcf;border-radius:9px;background:#fff;"></div>
<div style="position:absolute;top:746.65px;font-size:23px;line-height:23px;color:#242424;white-space:nowrap;letter-spacing:-0.068px;left:1119.40px;">Period Range</div>
<svg style="position:absolute;left:1417.50px;top:746.50px;" width="27" height="17" viewBox="0 0 27 17" fill="none"><path d="M1.5 1.5 L13.5 13.5 L25.5 1.5" stroke="#2b2b2b" stroke-width="2"/></svg>
<div style="position:absolute;top:683.40px;font-size:24px;line-height:24px;color:#242424;white-space:nowrap;-webkit-text-stroke:0.45px #242424;letter-spacing:-0.365px;left:1505.00px;">Source Periods</div>
<div style="position:absolute;left:1504.70px;top:723.50px;width:378.50px;height:62.40px;border:2px solid #cfcfcf;border-radius:9px;background:#fff;"></div>
<div style="position:absolute;top:744.25px;font-size:27px;line-height:27px;color:#424242;white-space:nowrap;letter-spacing:0.144px;left:1526.80px;">Oct 2024 - Dec 2024</div>
<svg style="position:absolute;left:1836px;top:473px;overflow:visible" width="28" height="28" viewBox="1836 473 28 28" fill="none"><rect x="1838.5" y="476.4" width="23.1" height="21" stroke="#3a3a3a" stroke-width="1.7"/><line x1="1838.5" y1="481.7" x2="1861.6" y2="481.7" stroke="#3a3a3a" stroke-width="1.7"/><line x1="1843.3" y1="474.7" x2="1843.3" y2="479" stroke="#3a3a3a" stroke-width="1.5"/><line x1="1856.9" y1="474.7" x2="1856.9" y2="479" stroke="#3a3a3a" stroke-width="1.5"/><rect x="1846.8" y="483.7" width="1.8" height="1.8" fill="#3a3a3a"/><rect x="1851.4" y="483.7" width="1.8" height="1.8" fill="#3a3a3a"/><rect x="1856.0" y="483.7" width="1.8" height="1.8" fill="#3a3a3a"/><rect x="1842.4" y="487.0" width="1.8" height="1.8" fill="#3a3a3a"/><rect x="1846.8" y="487.0" width="1.8" height="1.8" fill="#3a3a3a"/><rect x="1851.4" y="487.0" width="1.8" height="1.8" fill="#3a3a3a"/><rect x="1856.0" y="487.0" width="1.8" height="1.8" fill="#3a3a3a"/><rect x="1842.4" y="490.1" width="1.8" height="1.8" fill="#3a3a3a"/><rect x="1846.8" y="490.1" width="1.8" height="1.8" fill="#3a3a3a"/><rect x="1851.4" y="490.1" width="1.8" height="1.8" fill="#3a3a3a"/><rect x="1856.0" y="490.1" width="1.8" height="1.8" fill="#3a3a3a"/><rect x="1842.4" y="493.1" width="1.8" height="1.8" fill="#3a3a3a"/><rect x="1846.8" y="493.1" width="1.8" height="1.8" fill="#3a3a3a"/><rect x="1851.4" y="493.1" width="1.8" height="1.8" fill="#3a3a3a"/></svg>
<svg style="position:absolute;left:1836px;top:741.5px;overflow:visible" width="28" height="28" viewBox="1836 741.5 28 28" fill="none"><rect x="1838.5" y="744.9" width="23.1" height="21" stroke="#3a3a3a" stroke-width="1.7"/><line x1="1838.5" y1="750.2" x2="1861.6" y2="750.2" stroke="#3a3a3a" stroke-width="1.7"/><line x1="1843.3" y1="743.2" x2="1843.3" y2="747.5" stroke="#3a3a3a" stroke-width="1.5"/><line x1="1856.9" y1="743.2" x2="1856.9" y2="747.5" stroke="#3a3a3a" stroke-width="1.5"/><rect x="1846.8" y="752.2" width="1.8" height="1.8" fill="#3a3a3a"/><rect x="1851.4" y="752.2" width="1.8" height="1.8" fill="#3a3a3a"/><rect x="1856.0" y="752.2" width="1.8" height="1.8" fill="#3a3a3a"/><rect x="1842.4" y="755.5" width="1.8" height="1.8" fill="#3a3a3a"/><rect x="1846.8" y="755.5" width="1.8" height="1.8" fill="#3a3a3a"/><rect x="1851.4" y="755.5" width="1.8" height="1.8" fill="#3a3a3a"/><rect x="1856.0" y="755.5" width="1.8" height="1.8" fill="#3a3a3a"/><rect x="1842.4" y="758.6" width="1.8" height="1.8" fill="#3a3a3a"/><rect x="1846.8" y="758.6" width="1.8" height="1.8" fill="#3a3a3a"/><rect x="1851.4" y="758.6" width="1.8" height="1.8" fill="#3a3a3a"/><rect x="1856.0" y="758.6" width="1.8" height="1.8" fill="#3a3a3a"/><rect x="1842.4" y="761.6" width="1.8" height="1.8" fill="#3a3a3a"/><rect x="1846.8" y="761.6" width="1.8" height="1.8" fill="#3a3a3a"/><rect x="1851.4" y="761.6" width="1.8" height="1.8" fill="#3a3a3a"/></svg>
<div style="position:absolute;left:1502.50px;top:1063.40px;width:191.00px;height:63.00px;border:2px solid #cfcfcf;border-radius:9px;background:#fff;"></div>
<div style="position:absolute;top:1085.65px;font-size:25px;line-height:25px;color:#242424;white-space:nowrap;letter-spacing:-0.15px;left:1571.30px;">Back</div>
<div style="position:absolute;left:1714.00px;top:1063.40px;width:191.70px;height:63.50px;background:#137a68;border-radius:9px;"></div>
<div style="position:absolute;top:1085.65px;font-size:25px;line-height:25px;color:#fff;white-space:nowrap;-webkit-text-stroke:0.45px #fff;letter-spacing:-0.5px;left:1782.50px;">Save</div>
</body></html>
